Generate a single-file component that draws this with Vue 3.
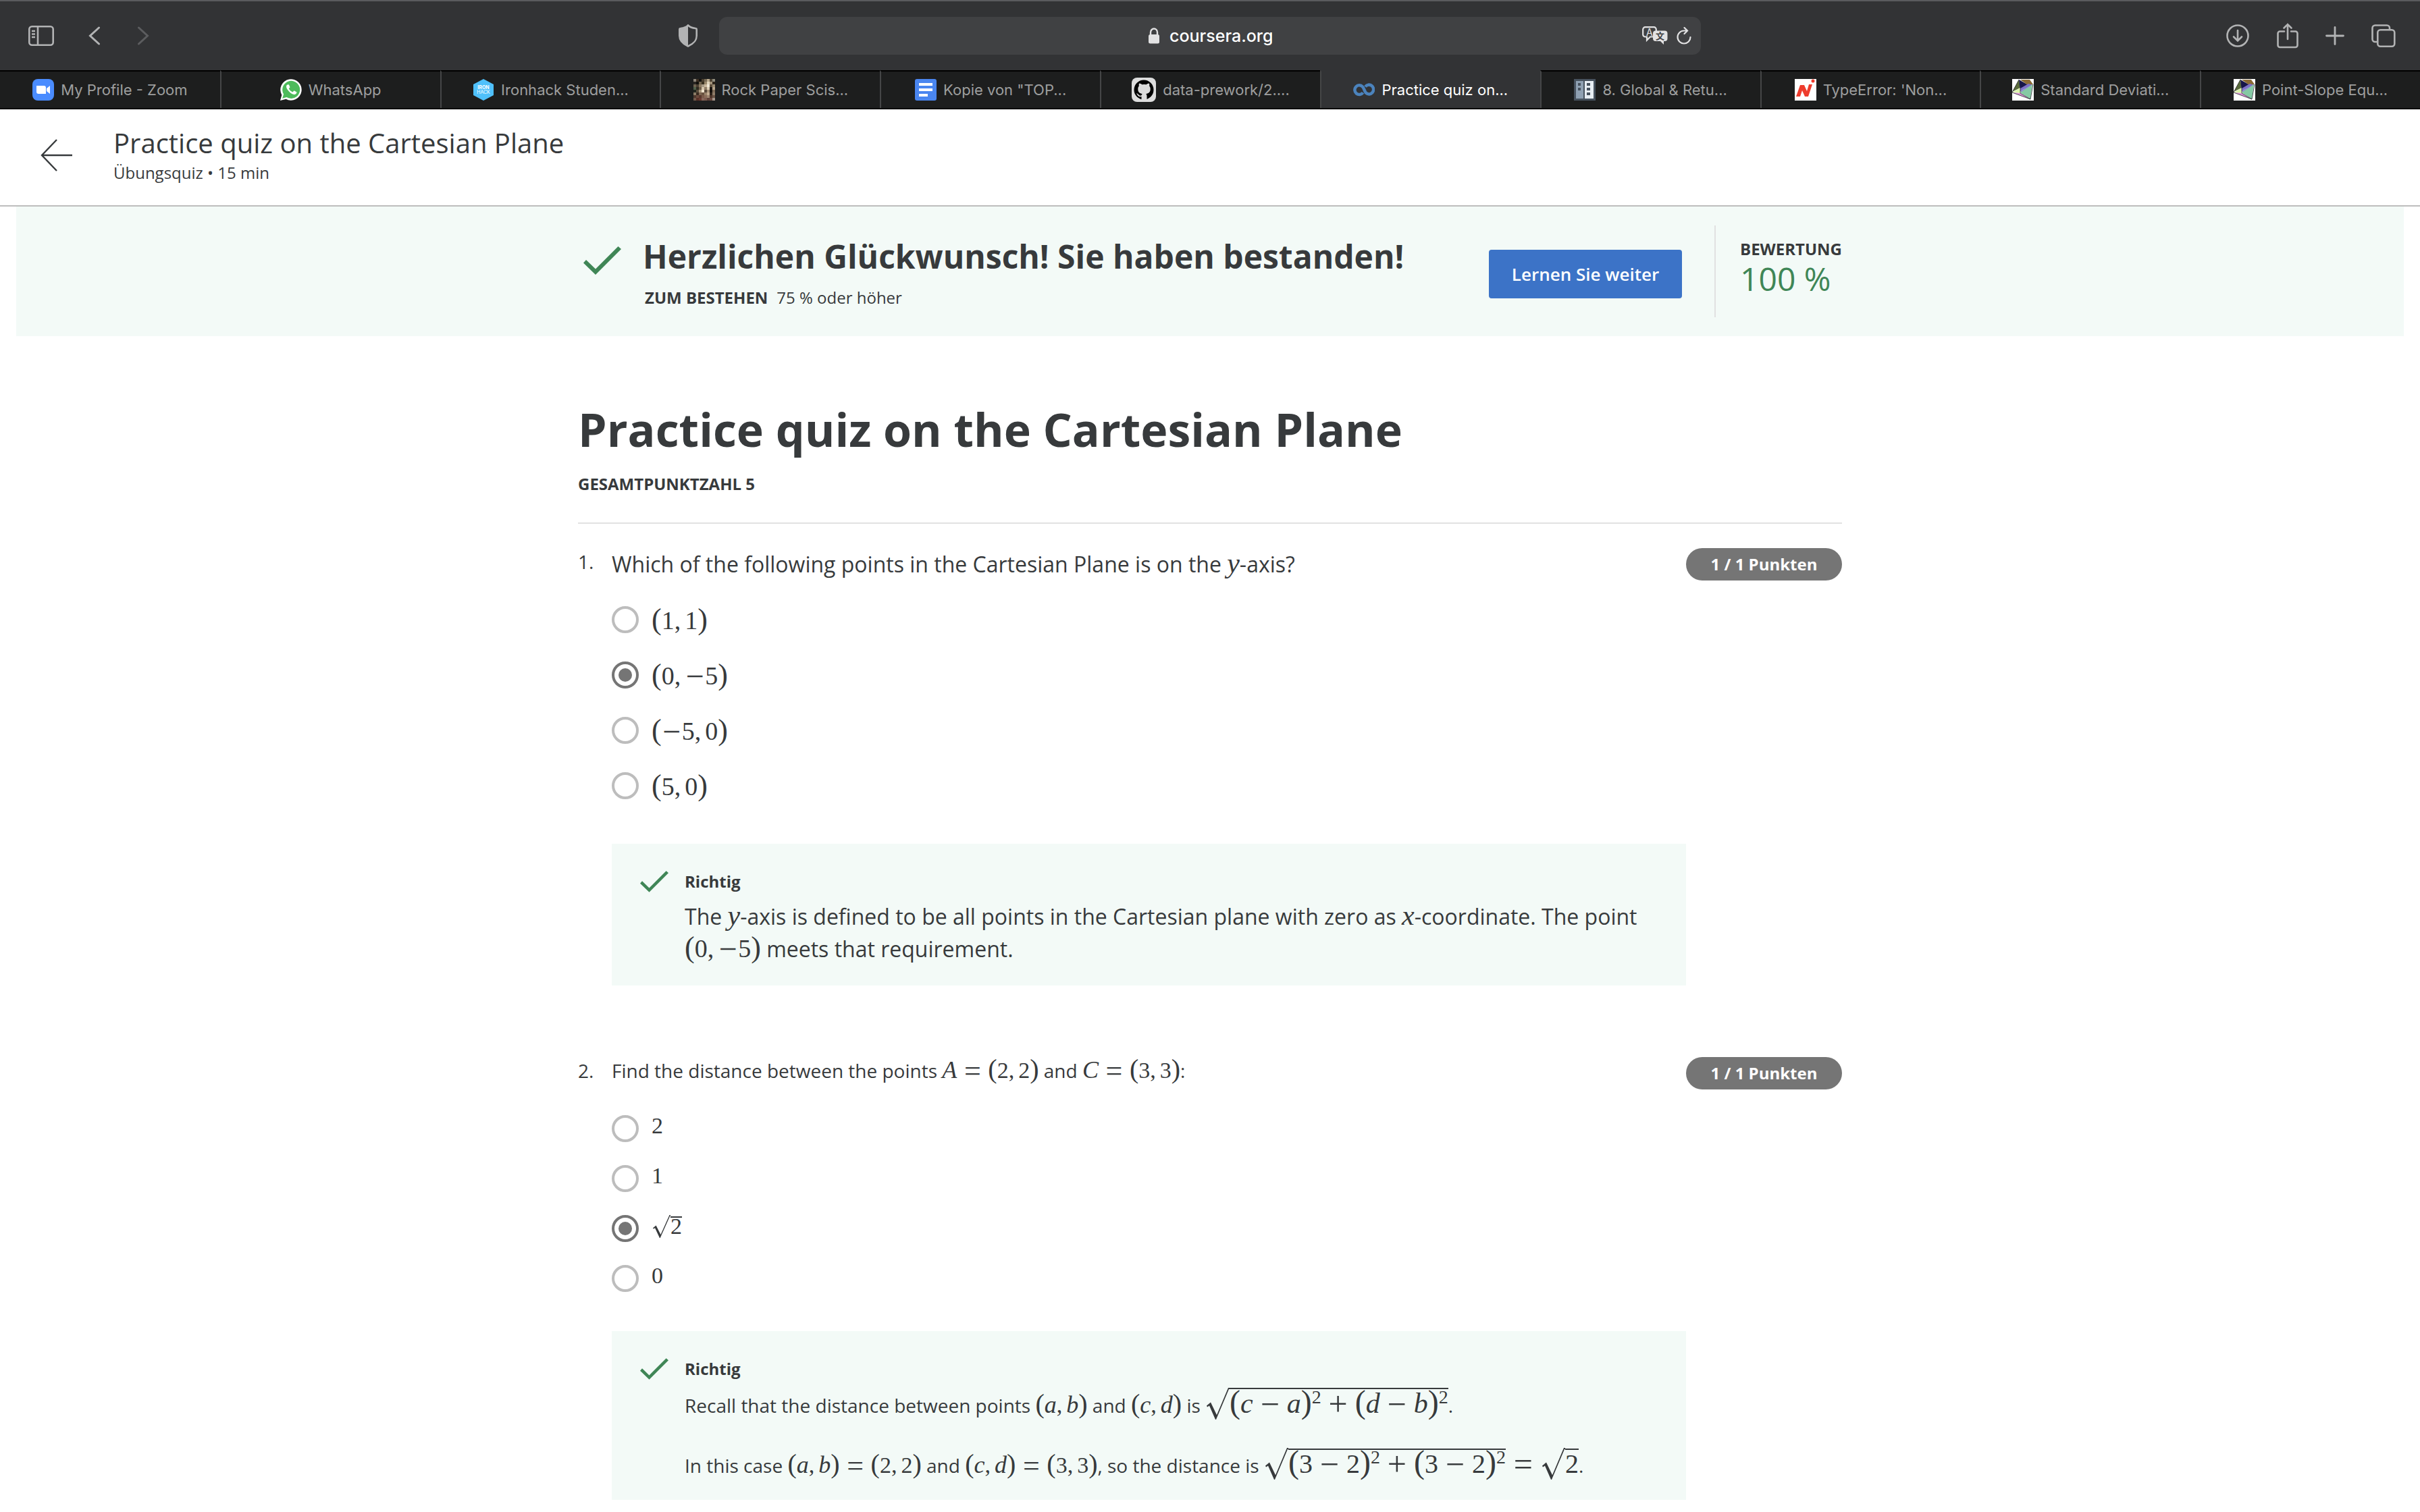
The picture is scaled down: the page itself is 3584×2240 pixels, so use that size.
<script setup>
import { h, ref } from 'vue'

const tabs = [
  { icon: 'zoom', label: 'My Profile - Zoom' },
  { icon: 'whatsapp', label: 'WhatsApp' },
  { icon: 'ironhack', label: 'Ironhack Studen...' },
  { icon: 'photo', label: 'Rock Paper Scis...' },
  { icon: 'docs', label: 'Kopie von "TOP...' },
  { icon: 'github', label: 'data-prework/2....' },
  { icon: 'coursera', label: 'Practice quiz on...', active: true },
  { icon: 'columns', label: '8. Global & Retu...' },
  { icon: 'n', label: "TypeError: 'Non..." },
  { icon: 'crystal', label: 'Standard Deviati...' },
  { icon: 'crystal', label: 'Point-Slope Equ...' },
]

const photoPixels = [
  '8a8378', '3a2d22', '15130f', '4b4030', '776a55', 'b9a98d', '4e4434', '8d8a7c',
  '2a2622', '12100c', '6d604c', '38301f', '97866a', 'e0d4bc', 'a3937a', '2c241a',
  '6e6350', '4a3f33', '8c7b62', 'a79a86', 'c8b79c', 'efe6d4', '5d4f3d', '9a8a72',
  '50604a', '2e2a20', '6f5e4b', 'd6c6ad', '8e7c66', 'dccdb4', '1e1813', 'b5a48b',
  '22261f', '584c3c', 'a8977d', 'f0e3cc', '5a4a3b', 'a58f76', '15100c', '7d6a56',
  '8b7b66', '39291f', '7e6652', '6b5341', '99826a', 'c4ad92', '2d2119', '8f7c68',
  '4f372c', '6c4a3d', '59392e', '7b5a49', '8a6c59', '9d8570', '4d352a', '6a5344',
  '71594b', '5a3027', '6a3a30', '86665a', '7b5a4e', '5f4138', '6b4a40', 'a2948a',
]

// Splits a small formula notation into drawn pieces:
// letters are variables, ^x is an exponent, √{…} is a root, a leading minus is a sign.
function pieces(src) {
  const out = []
  let i = 0
  while (i < src.length) {
    const c = src[i]
    if (c === '√') {
      const end = src.indexOf('}', i)
      out.push(
        h('span', { class: 'root' }, [
          h('svg', { class: 'radical', viewBox: '0 0 34 48', preserveAspectRatio: 'none', 'aria-hidden': 'true' }, [
            h('path', { d: 'M0 27 L6 22 L15 41 L32 0 H34 V2 H33 L14 48 H13 L4 27 L1 29 Z', fill: 'currentColor' }),
          ]),
          h('span', { class: 'radicand' }, pieces(src.slice(i + 2, end))),
        ]),
      )
      i = end + 1
      continue
    }
    if (c === '^') {
      out.push(h('sup', src[i + 1]))
      i += 2
      continue
    }
    if (c === '(' || c === ')') out.push(h('span', { class: 'paren' }, c))
    else if (c === ',') out.push(h('span', { class: 'comma' }, c))
    else if (c === '=') out.push(h('span', { class: 'op rel' }, c))
    else if (c === '+') out.push(h('span', { class: 'op bin' }, c))
    else if (c === '-') {
      const unary = i === 0 || '(,'.includes(src[i - 1])
      out.push(h('span', { class: unary ? 'op' : 'op bin' }, '−'))
    } else if (/[a-zA-Z]/.test(c)) out.push(h('i', c))
    else out.push(c)
    i++
  }
  return out
}

const Formula = (props) => h('span', { class: ['formula', props.size] }, pieces(props.src))
Formula.props = ['src', 'size']

const t = (text) => ({ text })
const m = (src, size) => ({ src, size })

const questions = [
  {
    id: 1,
    size: 'large',
    prompt: [t('Which of the following points in the Cartesian Plane is on the '), m('y', 'mid'), t('-axis?')],
    options: ['(1,1)', '(0,-5)', '(-5,0)', '(5,0)'],
    answer: ref('(0,-5)'),
    feedback: [
      [
        t('The '), m('y', 'mid'),
        t('-axis is defined to be all points in the Cartesian plane with zero as '), m('x', 'mid'),
        t('-coordinate. The point '), m('(0,-5)', 'mid'), t(' meets that requirement.'),
      ],
    ],
  },
  {
    id: 2,
    size: 'regular',
    prompt: [t('Find the distance between the points '), m('A=(2,2)', 'small'), t(' and '), m('C=(3,3)', 'small'), t(':')],
    options: ['2', '1', '√{2}', '0'],
    answer: ref('√{2}'),
    feedback: [
      [
        t('Recall that the distance between points '), m('(a,b)', 'small'), t(' and '), m('(c,d)', 'small'),
        t(' is '), m('√{(c-a)^2+(d-b)^2}', 'big'), t('.'),
      ],
      [
        t('In this case '), m('(a,b)=(2,2)', 'small'), t(' and '), m('(c,d)=(3,3)', 'small'),
        t(', so the distance is '), m('√{(3-2)^2+(3-2)^2}=√{2}', 'big'), t('.'),
      ],
    ],
  },
]
</script>

<template>
  <div class="page">
    <div class="toolbar">
      <div class="tools-left">
        <button class="tool sidebar" aria-label="Sidebar">
          <svg width="38" height="30" viewBox="0 0 38 30" fill="none" stroke="currentColor" stroke-width="2.6">
            <rect x="1.3" y="1.3" width="35.4" height="27.4" rx="4" />
            <path d="M14 1v28M5 8h5M5 12.500h5M5 17h5" />
          </svg>
        </button>
        <button class="tool back" aria-label="Zurück">
          <svg width="18" height="28" viewBox="0 0 18 28" fill="none" stroke="currentColor" stroke-width="3" stroke-linecap="round"><path d="M15.500 2L2.500 14l13 12" /></svg>
        </button>
        <button class="tool forward" aria-label="Vorwärts" disabled>
          <svg width="18" height="28" viewBox="0 0 18 28" fill="none" stroke="currentColor" stroke-width="3" stroke-linecap="round"><path d="M2.500 2l13 12-13 12" /></svg>
        </button>
        <button class="tool shield" aria-label="Datenschutz">
          <svg width="28" height="34" viewBox="0 0 28 34">
            <path d="M14 1.500C17 4.500 21 5.500 25 6c1 0 1.700.8 1.700 1.800V17c0 8-5 12-12.700 15.500C6.300 29 1.300 25 1.300 17V7.800C1.300 6.800 2 6 3 6c4-.5 8-1.500 11-4.500z" fill="none" stroke="currentColor" stroke-width="2.600" />
            <path d="M14 1.500C11 4.500 7 5.500 3 6c-1 0-1.700.8-1.700 1.800V17c0 8 5 12 12.700 15.500z" fill="currentColor" />
          </svg>
        </button>
      </div>

      <div class="address">
        <label class="address-text">
          <svg width="18" height="24" viewBox="0 0 18 24" aria-hidden="true">
            <path d="M4 11V7a5 5.500 0 0 1 10 0v4" fill="none" stroke="currentColor" stroke-width="2.400" />
            <rect x="1" y="10" width="16" height="13.500" rx="2.500" fill="currentColor" />
          </svg>
          <input type="text" value="coursera.org" aria-label="Adresse" />
        </label>
        <div class="address-tools">
          <button class="tool bright" aria-label="Übersetzen">
            <svg width="38" height="28" viewBox="0 0 38 28">
              <path d="M16 15.500H12l-5 5v-5H4.500A3.300 3.300 0 0 1 1.200 12.200V4.500A3.300 3.300 0 0 1 4.500 1.200h13A3.300 3.300 0 0 1 20.800 4.500V7" fill="none" stroke="currentColor" stroke-width="2.200" />
              <text x="6" y="14" font-family="Inter, sans-serif" font-size="14" fill="currentColor">A</text>
              <path d="M20 6.500h13.500a4 4 0 0 1 4 4v7.500a4 4 0 0 1-4 4H32v5l-5-5h-7a4 4 0 0 1-4-4v-7.500a4 4 0 0 1 4-4z" fill="currentColor" />
              <text x="20" y="19" font-family="'Noto Sans CJK SC', sans-serif" font-weight="700" font-size="13" fill="#404143">文</text>
            </svg>
          </button>
          <button class="tool bright" aria-label="Neu laden">
            <svg width="22" height="26" viewBox="0 0 22 26" fill="none" stroke="currentColor" stroke-width="2.200" stroke-linecap="round">
              <path d="M20.500 15a9.500 9.500 0 1 1-9.500-9.500h4.500M11.500 1l4.500 4.500-4.500 4.500" />
            </svg>
          </button>
        </div>
      </div>

      <div class="tools-right">
        <button class="tool" aria-label="Downloads">
          <svg width="34" height="34" viewBox="0 0 34 34" fill="none" stroke="currentColor" stroke-width="2.600" stroke-linecap="round"><circle cx="17" cy="17" r="15.500" /><path d="M17 9v15M11 18.500l6 6 6-6" /></svg>
        </button>
        <button class="tool" aria-label="Teilen">
          <svg width="32" height="38" viewBox="0 0 32 38" fill="none" stroke="currentColor" stroke-width="2.600" stroke-linecap="round"><path d="M11 12.500H4.500a3 3 0 0 0-3 3v17.500a3 3 0 0 0 3 3h23a3 3 0 0 0 3-3V15.500a3 3 0 0 0-3-3H21M16 24V2M10.500 7.500L16 2l5.500 5.500" /></svg>
        </button>
        <button class="tool" aria-label="Neuer Tab">
          <svg width="28" height="28" viewBox="0 0 28 28" fill="none" stroke="currentColor" stroke-width="2.800" stroke-linecap="round"><path d="M14 1.500v25M1.500 14h25" /></svg>
        </button>
        <button class="tool" aria-label="Tabübersicht">
          <svg width="36" height="34" viewBox="0 0 36 34" fill="none" stroke="currentColor" stroke-width="2.600"><rect x="9.300" y="8.300" width="25" height="24.400" rx="4" /><path d="M9 26H5.500a4 4 0 0 1-4-4V5.500a4 4 0 0 1 4-4H23a4 4 0 0 1 4 4V8" /></svg>
        </button>
      </div>
    </div>

    <nav class="tabs" aria-label="Tabs">
      <a v-for="tab in tabs" :key="tab.label" href="#" class="tab" :class="{ active: tab.active }">
        <svg v-if="tab.icon === 'zoom'" width="32" height="32" viewBox="0 0 32 32"><rect width="32" height="32" rx="8" fill="#4a8cff" /><path d="M6 10h11a3 3 0 0 1 3 3v9H9a3 3 0 0 1-3-3zM21 14l5-4v12l-5-4z" fill="#fff" /></svg>
        <svg v-else-if="tab.icon === 'whatsapp'" width="32" height="32" viewBox="0 0 32 32"><path d="M0 32l2.300-8.300A15.700 15.700 0 1 1 8.500 29.800z" fill="#fff" /><path d="M3.200 28.800l1.900-6.200A13 13 0 1 1 9.500 27z" fill="#4dbb5b" /><path d="M10.500 8.500c-2 1.500-2 4 .5 7.500s6 6.500 9.500 7c2 .2 4-1.500 4-3.500l-4-2.200-2 2.200c-2.500-1-4.500-3-5.700-5.300l1.700-2-1.700-4z" fill="#fff" /></svg>
        <svg v-else-if="tab.icon === 'ironhack'" width="32" height="32" viewBox="0 0 32 32"><path d="M16 0l15 8v16l-15 8-15-8V8z" fill="#4fc0fb" /><g font-family="Inter, sans-serif" font-size="7" fill="#fff" text-anchor="middle"><text x="16" y="15" font-weight="700">IRON</text><text x="16" y="22">HACK</text></g></svg>
        <svg v-else-if="tab.icon === 'photo'" width="32" height="32" viewBox="0 0 32 32" shape-rendering="crispEdges"><rect v-for="(c, i) in photoPixels" :key="i" :x="(i % 8) * 4" :y="Math.floor(i / 8) * 4" width="4" height="4" :fill="'#' + c" /></svg>
        <svg v-else-if="tab.icon === 'docs'" width="32" height="32" viewBox="0 0 32 32"><rect width="32" height="32" rx="3" fill="#4a86f0" /><path d="M6 6h20v4H6zM6 14h20v4H6zM6 22h13v4H6z" fill="#fff" /></svg>
        <svg v-else-if="tab.icon === 'github'" width="36" height="36" viewBox="0 0 36 36"><rect width="36" height="36" rx="8" fill="#ddd" /><circle cx="18" cy="18" r="14.500" fill="#000" /><path d="M14.500 33v-5c-3 .6-5-.3-6-2.500l-1.500-2c2-.5 3 1.500 4 2.500s2.500 1 3.500.3c.2-1 .6-1.800 1.300-2.300-4-.5-6.500-2.500-6.500-7 0-2 .6-3.300 1.600-4.400-.4-1.300-.3-2.800.2-4 1.500 0 3 .8 4.200 1.700a14 14 0 0 1 6.400 0c1.200-.9 2.700-1.700 4.200-1.700.5 1.200.6 2.700.2 4 1 1.100 1.600 2.400 1.600 4.400 0 4.500-2.500 6.500-6.500 7 .9.800 1.300 2 1.300 3.500V33z" fill="#ddd" /></svg>
        <svg v-else-if="tab.icon === 'coursera'" width="32" height="20" viewBox="0 0 32 20" fill="none" stroke="#4b83bd" stroke-width="4.500"><path d="M14.500 14.200A6.700 6.900 0 1 1 14 5.500C16.500 8 16.500 12 19 14.700A6.700 6.900 0 1 0 18 5.500" /></svg>
        <svg v-else-if="tab.icon === 'columns'" width="32" height="32" viewBox="0 0 32 32"><rect width="32" height="32" fill="#47525e" /><rect x="3" y="3" width="11" height="26" fill="#8fa0b2" /><rect x="16" y="3" width="13" height="26" fill="#e8eef4" /><path d="M6 6h4v4H6zM6 13h4v4H6zM19 6h5v4h-5zM19 13h5v4h-5zM19 20h5v4h-5z" fill="#47525e" /></svg>
        <svg v-else-if="tab.icon === 'n'" width="32" height="32" viewBox="0 0 32 32"><rect width="32" height="32" fill="#fff" /><path d="M2 26L8 9h6l4 9 3-10h5l-6 18h-5l-4-9-3 9z" fill="#ee3c2d" /><circle cx="27" cy="3" r="2.500" fill="#ee3c2d" /></svg>
        <svg v-else width="32" height="32" viewBox="0 0 32 32"><rect width="32" height="32" fill="#fff" /><path d="M10 1L0 19l12-6z" fill="#5a6b3c" /><path d="M10 1l14 8-12 9z" fill="#17164a" /><path d="M12 1h14l5 7-8 1z" fill="#8a6a35" /><path d="M12 14L24 7l7 2-20 9z" fill="#7d72c6" /><path d="M12 18l18-10-13 15z" fill="#8d83d2" /><path d="M0 20l12-7v8z" fill="#dcf5ae" /><path d="M0 20l12 1 15 9z" fill="#d993d5" /><path d="M12 20L30 8l-3 22z" fill="#85c9a4" /><path d="M10 1L0 20l27 10 4-22M12 13v8l15 9" fill="none" stroke="#2b2b33" stroke-width=".8" /></svg>
        <span>{{ tab.label }}</span>
      </a>
    </nav>

    <header class="course-header">
      <a href="#" class="go-back" aria-label="Zurück">
        <svg width="48" height="48" viewBox="0 0 48 48" fill="none" stroke="#373a3c" stroke-width="2.400"><path d="M24 1L2 24l22 23M2 24h45" /></svg>
      </a>
      <div>
        <div class="course-title">Practice quiz on the Cartesian Plane</div>
        <div class="course-sub">Übungsquiz • 15 min</div>
      </div>
    </header>

    <section class="banner">
      <div class="banner-inner">
        <svg class="banner-check" width="56" height="42" viewBox="0 0 56 42"><path d="M4 20L0 24.500 18 42 56 4 51.500 0 18 33.500z" fill="#3f8656" /></svg>
        <div class="banner-text">
          <h2>Herzlichen Glückwunsch! Sie haben bestanden!</h2>
          <p><strong>ZUM BESTEHEN</strong><span>75 % oder höher</span></p>
        </div>
        <button class="continue">Lernen Sie weiter</button>
        <div class="grade">
          <div class="grade-label">BEWERTUNG</div>
          <div class="grade-value">100 %</div>
        </div>
      </div>
    </section>

    <main class="quiz">
      <h1>Practice quiz on the Cartesian Plane</h1>
      <div class="total">GESAMTPUNKTZAHL 5</div>
      <hr />
      <section v-for="q in questions" :key="q.id" class="question" :class="q.size">
        <div class="number">{{ q.id }}.</div>
        <div class="body">
          <div :id="'prompt-' + q.id" class="prompt">
            <template v-for="(part, i) in q.prompt" :key="i"><Formula v-if="part.src" v-bind="part" /><template v-else>{{ part.text }}</template></template>
          </div>
          <div class="options" role="radiogroup" :aria-labelledby="'prompt-' + q.id">
            <label v-for="option in q.options" :key="option" class="option">
              <input v-model="q.answer.value" type="radio" :name="'question-' + q.id" :value="option" />
              <span class="option-text"><Formula :src="option" :size="q.size === 'large' ? 'mid' : 'small'" /></span>
            </label>
          </div>
          <div class="feedback">
            <svg width="42" height="32" viewBox="0 0 56 42"><path d="M4 20L0 24.500 18 42 56 4 51.500 0 18 33.500z" fill="#3f8656" /></svg>
            <div class="feedback-text">
              <h3>Richtig</h3>
              <p v-for="(line, n) in q.feedback" :key="n">
                <template v-for="(part, i) in line" :key="i"><Formula v-if="part.src" v-bind="part" /><template v-else>{{ part.text }}</template></template>
              </p>
            </div>
          </div>
        </div>
        <div class="points">1 / 1 Punkten</div>
      </section>
    </main>
  </div>
</template>

<style>
body {
  margin: 0;
  background: #fff;
}
</style>

<style scoped>
.page {
  font-family: 'Open Sans', 'Noto Sans', sans-serif;
  color: #373a3c;
}
.page * {
  box-sizing: border-box;
}
button {
  font: inherit;
  cursor: pointer;
}
svg {
  display: block;
  flex: none;
}

/* Browser chrome */
.toolbar {
  display: grid;
  grid-template-columns: 1fr minmax(0, 1454px) 1fr;
  align-items: center;
  height: 104px;
  border-top: 2px solid #5a5b5e;
  background: #323335;
  font-family: Inter, Roboto, sans-serif;
}
.tool {
  display: flex;
  padding: 0;
  border: 0;
  background: none;
  color: #b2b3b4;
}
.tool:disabled {
  color: #5c5d5f;
}
.tool.bright {
  color: #e2e2e3;
}
.tools-left {
  display: flex;
  align-items: center;
  padding: 0 32px 0 42px;
}
.back {
  margin-left: 51px;
}
.forward {
  margin-left: 54px;
}
.shield {
  margin-left: auto;
}
.tools-right {
  display: flex;
  align-items: center;
  justify-content: flex-end;
  gap: 40px;
  padding-right: 36px;
}
.tools-right .tool:first-child {
  margin-right: 1px;
}
.address {
  display: grid;
  grid-template-columns: 1fr auto 1fr;
  align-items: center;
  height: 56px;
  padding: 0 14px;
  border-radius: 12px;
  background: #404143;
}
.address-text {
  grid-column: 2;
  display: flex;
  align-items: center;
  gap: 14px;
  color: #e2e2e3;
}
.address-text input {
  width: 152px;
  padding: 0;
  border: 0;
  outline: 0;
  background: none;
  color: #fff;
  font: 500 25px/32px Inter, Roboto, sans-serif;
}
.address-tools {
  display: flex;
  align-items: center;
  justify-content: flex-end;
  gap: 13px;
}
.tabs {
  display: grid;
  grid-template-columns: repeat(11, minmax(0, 1fr));
  height: 58px;
  border-bottom: 2px solid #0a0a0a;
  font-family: Inter, Roboto, sans-serif;
}
.tab {
  display: flex;
  align-items: center;
  justify-content: center;
  gap: 10px;
  border-top: 2px solid #000;
  border-left: 2px solid #454647;
  background: #1d1e1e;
  color: #9d9e9e;
  font-size: 22px;
  line-height: 28px;
  white-space: nowrap;
  text-decoration: none;
}
.tab:first-child {
  border-left: 0;
}
.tab.active {
  border-top-color: #323335;
  background: #323335;
  color: #fff;
}

/* Course header */
.course-header {
  display: flex;
  align-items: center;
  gap: 60px;
  padding: 26px 60px 32px;
  border-bottom: 2px solid #bdbdbd;
}
.course-title {
  font-size: 40px;
  line-height: 48px;
}
.course-sub {
  margin-top: 4px;
  font-size: 24px;
  line-height: 32px;
}

/* Result banner */
.banner {
  margin: 0 24px;
  padding: 28px 24px;
  background: #f3faf7;
}
.banner-inner {
  display: flex;
  align-items: flex-start;
  max-width: 1872px;
  height: 136px;
  margin: 0 auto;
  padding-left: 8px;
}
.banner-check {
  margin: 31px 32px 0 0;
}
.banner-text {
  padding-top: 14px;
}
.banner-text h2 {
  margin: 0;
  font-size: 48px;
  font-weight: 700;
  line-height: 64px;
}
.banner-text p {
  display: flex;
  gap: 13px;
  margin: 13px 0 0 3px;
  font-size: 24px;
  line-height: 32px;
}
.continue {
  width: 286px;
  height: 72px;
  margin: 36px 48px 0 auto;
  padding: 0;
  border: 0;
  border-radius: 4px;
  background: #3c73c7;
  color: #fff;
  font-size: 26px;
  font-weight: 600;
  line-height: 36px;
}
.grade {
  align-self: stretch;
  padding: 19px 0 0 36px;
  border-left: 2px solid #e1e1e1;
}
.grade-label {
  font-size: 24px;
  font-weight: 700;
  line-height: 32px;
}
.grade-value {
  color: #3f8656;
  font-size: 48px;
  line-height: 56px;
}

/* Quiz */
.quiz {
  max-width: 1872px;
  margin: 90px auto 0;
}
.quiz h1 {
  margin: 0;
  font-size: 68px;
  font-weight: 700;
  line-height: 96px;
}
.total {
  margin-top: 17px;
  font-size: 24px;
  font-weight: 700;
  line-height: 32px;
}
.quiz hr {
  height: 2px;
  margin: 41px 0 36px;
  border: 0;
  background: #e1e1e1;
}
.question {
  display: grid;
  grid-template-columns: 50px minmax(0, 1fr) auto;
  align-items: start;
}
.question + .question {
  margin-top: 106px;
}
.number {
  font-size: 28px;
  line-height: 40px;
}
.points {
  width: 231px;
  height: 48px;
  border-radius: 24px;
  background: #757575;
  color: #fff;
  font-size: 24px;
  font-weight: 700;
  line-height: 48px;
  text-align: center;
}
.prompt {
  height: 48px;
  font-size: 32px;
  line-height: 48px;
}
.regular .prompt {
  font-size: 28px;
  line-height: 40px;
}
.options {
  display: flex;
  flex-direction: column;
  gap: 42px;
  margin-top: 38px;
}
.regular .options {
  gap: 34px;
}
.option {
  display: flex;
  align-items: flex-start;
  gap: 19px;
  height: 40px;
}
.option input {
  flex: none;
  width: 40px;
  height: 40px;
  margin: 0;
  padding: 6px;
  border: 4px solid #bdbdbd;
  border-radius: 50%;
  appearance: none;
}
.option input:checked {
  border-color: #757575;
  background: #757575 content-box;
}
.option-text {
  font-family: 'Liberation Serif', serif;
  font-size: 38px;
  line-height: 42px;
}
.regular .option-text {
  font-size: 34px;
  line-height: 32px;
}
.feedback {
  display: flex;
  align-items: flex-start;
  gap: 24px;
  margin-top: 66px;
  padding: 40px 42px 30px;
  background: #f3faf7;
}
.regular .feedback {
  margin-top: 58px;
}
.feedback h3 {
  margin: 0 0 12px;
  font-size: 24px;
  font-weight: 700;
  line-height: 32px;
}
.feedback p {
  margin: 0;
  font-size: 32px;
  line-height: 48px;
}
.regular .feedback p {
  font-size: 28px;
  line-height: 40px;
}
.feedback p + p {
  margin-top: 42px;
}

/* Formulas */
.formula {
  font-family: 'Liberation Serif', serif;
  line-height: 0;
  white-space: nowrap;
}
.formula.small {
  font-size: 34px;
}
.formula.mid {
  font-size: 38px;
}
.formula.big {
  font-size: 40px;
}
.formula :deep(i) {
  font-size: 42px;
}
.formula.small :deep(i) {
  font-size: 36px;
}
.formula :deep(.paren) {
  font-size: 44px;
}
.formula.small :deep(.paren) {
  font-size: 40px;
}
.formula.big :deep(.paren) {
  font-size: 48px;
}
.formula :deep(.comma) {
  margin-right: 6px;
}
.formula :deep(.op) {
  display: inline-block;
  width: 30px;
  font-size: 48px;
  text-align: center;
  vertical-align: -4px;
}
.formula.small :deep(.op) {
  width: 26px;
  font-size: 44px;
}
.formula.big :deep(.op) {
  width: 32px;
  font-size: 50px;
}
.formula :deep(.bin) {
  margin: 0 9px;
}
.formula :deep(.rel) {
  margin: 0 10px;
}
.formula :deep(sup) {
  font-size: 28px;
  line-height: 0;
  vertical-align: 14px;
}
.formula :deep(.radical) {
  display: inline-block;
  width: 26px;
  height: 34px;
  margin-left: 2px;
  vertical-align: -6px;
}
.formula.big :deep(.radical) {
  width: 34px;
  height: 47px;
  vertical-align: -10px;
}
.formula :deep(.radicand) {
  display: inline-block;
  border-top: 2px solid currentColor;
  line-height: 26px;
}
.formula.big :deep(.radicand) {
  padding-top: 4px;
  line-height: 34px;
}
.formula :deep(.radicand > span) {
  line-height: 0;
}
</style>
